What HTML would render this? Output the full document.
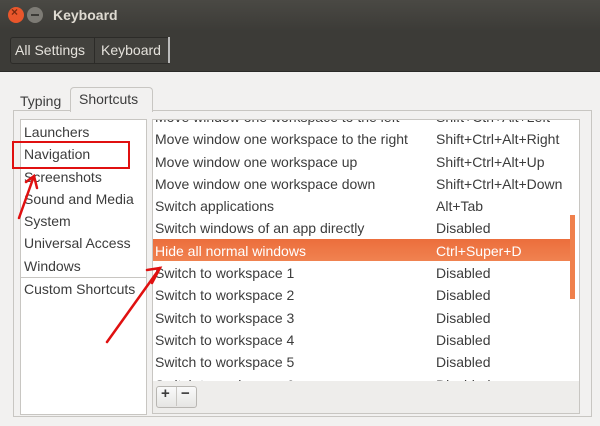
<!DOCTYPE html><html><head><style>
body{margin:0;width:600px;height:426px;overflow:hidden;background:#f2f1f0;font-family:"Liberation Sans",sans-serif;font-size:14px;color:#3c3c3c;position:relative}
.a{position:absolute;white-space:nowrap}
</style></head><body>
<div class="a" style="left:0;top:0;width:600px;height:31px;background:linear-gradient(#4a4944,#3c3b37)"></div>
<div class="a" style="left:8px;top:7px;width:16px;height:16px;border-radius:50%;background:#e9562b"></div>
<div class="a" style="left:11px;top:5px;font-size:12px;color:#7a2a10;font-weight:bold">×</div>
<div class="a" style="left:27px;top:7px;width:16px;height:16px;border-radius:50%;background:#7d7b75"></div>
<div class="a" style="left:31px;top:14px;width:8px;height:2px;background:#3c3b37"></div>
<div class="a" style="left:53px;top:7px;color:#dfdbd2;font-weight:bold;font-size:14px">Keyboard</div>
<div class="a" style="left:0;top:31px;width:600px;height:40px;background:#3c3b37;border-bottom:1px solid #2a2a28"></div>
<div class="a" style="left:10px;top:37px;width:158px;height:25px;border:1px solid #2c2b28;border-radius:3px;background:#42413d"></div>
<div class="a" style="left:94px;top:38px;width:1px;height:25px;background:#2c2b28"></div>
<div class="a" style="left:168px;top:37px;width:2px;height:26px;background:#bbb"></div>
<div class="a" style="left:15px;top:42px;color:#e5e2dc">All Settings</div>
<div class="a" style="left:101px;top:42px;color:#e5e2dc">Keyboard</div>
<div class="a" style="left:13px;top:110px;width:577px;height:305px;border:1px solid #c8c6c2;background:#f2f1f0"></div>
<div class="a" style="left:70px;top:87px;width:81px;height:24px;border:1px solid #c8c6c2;border-bottom:none;border-radius:4px 4px 0 0;background:#f2f1f0"></div>
<div class="a" style="left:20px;top:93px">Typing</div>
<div class="a" style="left:79px;top:91px">Shortcuts</div>
<div class="a" style="left:20px;top:119px;width:125px;height:294px;border:1px solid #c8c6c2;background:#fff"></div>
<div class="a" style="left:21px;top:277px;width:125px;height:1px;background:#c8c6c2"></div>
<div class="a" style="left:24px;top:121px;line-height:22.3px">Launchers<br>Navigation<br>Screenshots<br>Sound and Media<br>System<br>Universal Access<br>Windows</div>
<div class="a" style="left:24px;top:281px">Custom Shortcuts</div>
<div class="a" style="left:152px;top:119px;width:426px;height:262px;border:1px solid #c8c6c2;background:#fff;overflow:hidden">
<div class="a" style="left:0;top:119px;width:418px;height:22px;background:linear-gradient(#ec6e3c,#f08250)"></div>
<div class="a" style="left:417px;top:95px;width:5px;height:84px;background:#f0804c"></div>
<div class="a" style="left:2px;top:-14px;line-height:22.3px">Move window one workspace to the left<br>Move window one workspace to the right<br>Move window one workspace up<br>Move window one workspace down<br>Switch applications<br>Switch windows of an app directly<br><span style="color:#fff">Hide all normal windows</span><br>Switch to workspace 1<br>Switch to workspace 2<br>Switch to workspace 3<br>Switch to workspace 4<br>Switch to workspace 5<br>Switch to workspace 6</div>
<div class="a" style="left:283px;top:-14px;line-height:22.3px">Shift+Ctrl+Alt+Left<br>Shift+Ctrl+Alt+Right<br>Shift+Ctrl+Alt+Up<br>Shift+Ctrl+Alt+Down<br>Alt+Tab<br>Disabled<br><span style="color:#fff">Ctrl+Super+D</span><br>Disabled<br>Disabled<br>Disabled<br>Disabled<br>Disabled<br>Disabled</div>
</div>
<div class="a" style="left:152px;top:381px;width:426px;height:32px;border:1px solid #c8c6c2;border-top:none;background:#eeedeb"></div>
<div class="a" style="left:156px;top:386px;width:39px;height:20px;border:1px solid #b8b6b2;border-radius:3px;background:linear-gradient(#fafafa,#e6e5e3)"></div>
<div class="a" style="left:176px;top:387px;width:1px;height:19px;background:#c8c6c2"></div>
<div class="a" style="left:161px;top:385px;font-weight:bold;font-size:15px">+</div>
<div class="a" style="left:181px;top:385px;font-weight:bold;font-size:15px">−</div>
<div class="a" style="left:12px;top:141px;width:114px;height:24px;border:2px solid #e01010"></div>
<svg class="a" style="left:0;top:0" width="600" height="426"><g stroke="#e01010" stroke-width="2.5" fill="none" stroke-linecap="round">
<path d="M19 218 L34 176 M26 182 L34 176 L37 188"/>
<path d="M107 342 L160 268 M147 270 L160 268 L152 283 M150 282 L160 268"/>
</g></svg>
</body></html>
